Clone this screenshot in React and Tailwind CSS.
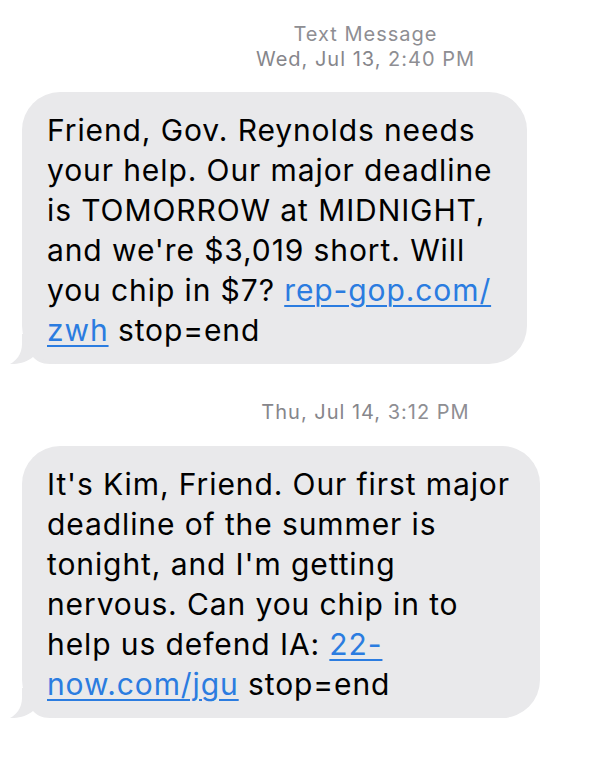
import React from 'react';

const Link = ({ children }) => (
  <span className="text-[#2b7ce0] underline decoration-[2px] underline-offset-[4px]">{children}</span>
);

const Tail = () => (
  <svg className="absolute left-[-12px] bottom-0" width="50" height="30" viewBox="0 0 50 30">
    <path d="M12,0 L12,10 C12,20 6,27 0,30 C8,30.5 17,28 23,23 C27,27 31,30 40,30 L50,30 L50,0 Z" fill="#e9e9eb" />
  </svg>
);

const Bubble = ({ width, children }) => (
  <div className={`relative ml-[22px] ${width}`}>
    <Tail />
    <div className="relative rounded-[38px] bg-[#e9e9eb] pl-[25px] pr-4 pt-[18px] pb-[14px] text-[30px] leading-[40px] tracking-[0.9px] text-black">
      {children}
    </div>
  </div>
);

const Stamp = ({ day, time }) => (
  <div className="pl-[132px] text-center text-[20px] leading-[25px] tracking-[1px] text-[#8e8e93]">
    <span className="text-[#86868b]">{day}</span> {time}
  </div>
);

export default function App() {
  return (
    <div className="w-[599px] h-[767px] bg-white overflow-hidden" style={{ fontFamily: 'Inter, "Noto Sans", sans-serif' }}>
      <div className="pt-[22px]">
        <div className="pl-[132px] text-center text-[20px] leading-[25px] tracking-[1px] text-[#8e8e93]">Text Message</div>
        <Stamp day="Wed, Jul 13," time="2:40 PM" />
      </div>

      <div className="mt-[20px]">
        <Bubble width="w-[505px]">
          Friend, Gov. Reynolds needs<br />
          your help. Our major deadline<br />
          is TOMORROW at MIDNIGHT,<br />
          and we're $3,019 short. Will<br />
          you chip in $7? <Link>rep-gop.com/</Link><br />
          <Link>zwh</Link> stop=end
        </Bubble>
      </div>

      <div className="mt-[36px]">
        <Stamp day="Thu, Jul 14," time="3:12 PM" />
      </div>

      <div className="mt-[21px]">
        <Bubble width="w-[518px]">
          It's Kim, Friend. Our first major<br />
          deadline of the summer is<br />
          tonight, and I'm getting<br />
          nervous. Can you chip in to<br />
          help us defend IA: <Link>22-</Link><br />
          <Link>now.com/jgu</Link> stop=end
        </Bubble>
      </div>
    </div>
  );
}
